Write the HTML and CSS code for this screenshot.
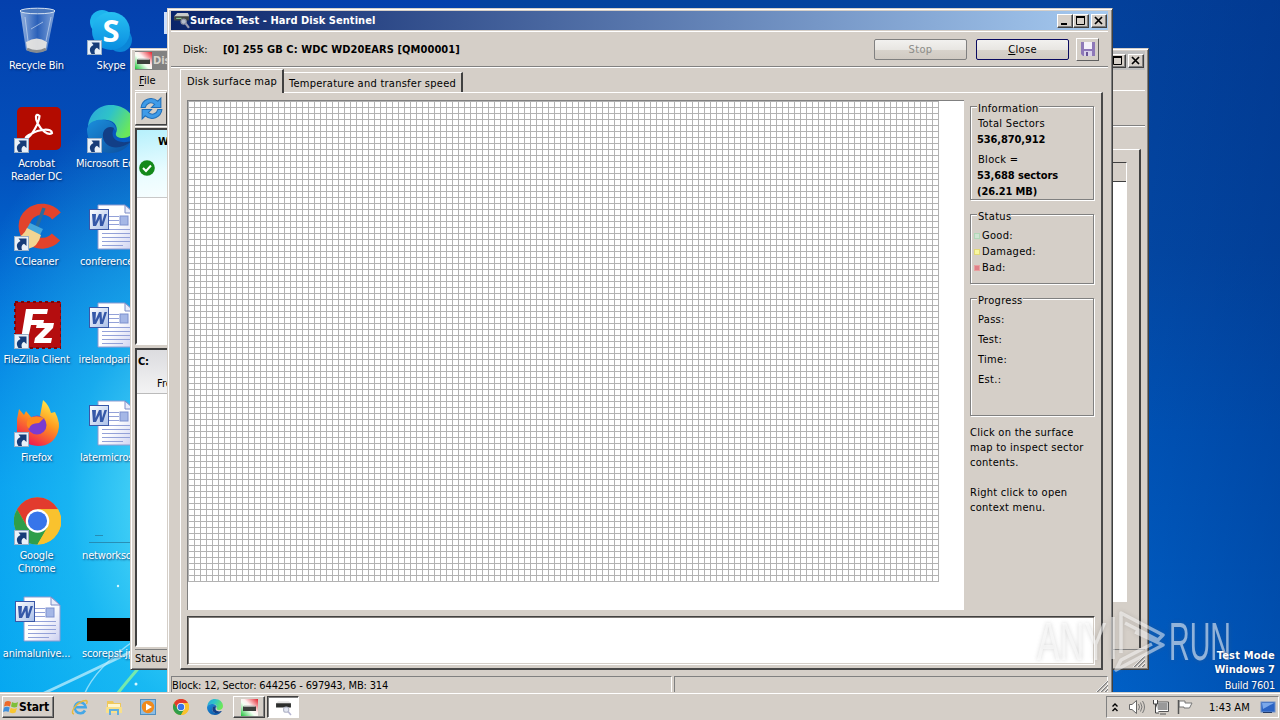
FILE: index.html
```html
<!DOCTYPE html>
<html lang="en">
<head>
<meta charset="utf-8">
<title>Surface Test - Hard Disk Sentinel</title>
<link rel="stylesheet" href="styles.css">
</head>
<body>
<svg class="defs" aria-hidden="true">
  <defs>
    <linearGradient id="gGlass" x1="0" x2="1"><stop offset="0" stop-color="#c9daf0" stop-opacity=".75"/><stop offset=".5" stop-color="#3b6dbd" stop-opacity=".7"/><stop offset="1" stop-color="#b9cfec" stop-opacity=".7"/></linearGradient>
    <linearGradient id="gFox" x1=".8" y1="0" x2=".3" y2="1"><stop offset="0" stop-color="#fff14f"/><stop offset=".45" stop-color="#ff9a1f"/><stop offset="1" stop-color="#f0144f"/></linearGradient>
    <linearGradient id="gEdge" x1="0" y1="0" x2="1" y2=".4"><stop offset="0" stop-color="#2aa6dc"/><stop offset=".5" stop-color="#2fc3c8"/><stop offset="1" stop-color="#6be85a"/></linearGradient>
    <linearGradient id="gEdge2" x1="0" y1="0" x2="1" y2="1"><stop offset="0" stop-color="#1b8fdc"/><stop offset="1" stop-color="#0c4d9c"/></linearGradient>
    <linearGradient id="gPage" x1="0" y1="0" x2="1" y2="1"><stop offset=".5" stop-color="#fff"/><stop offset="1" stop-color="#ccd0f0"/></linearGradient>
    <linearGradient id="gW" x1="0" y1="0" x2="1" y2="1"><stop offset="0" stop-color="#fff"/><stop offset="1" stop-color="#a9bfe8"/></linearGradient>
    <linearGradient id="gHds" x1="0" y1="1" x2="1" y2="0"><stop offset="0" stop-color="#1fc23a"/><stop offset=".42" stop-color="#f4fff4"/><stop offset=".58" stop-color="#fff0f0"/><stop offset="1" stop-color="#e4202c"/></linearGradient>
    <linearGradient id="gSkype" x1="0" y1="0" x2="0" y2="1"><stop offset="0" stop-color="#27c0f2"/><stop offset="1" stop-color="#0a8de0"/></linearGradient>
    <symbol id="link" viewBox="0 0 15 15"><rect x=".5" y=".5" width="14" height="14" fill="#e9f1f9" stroke="#9ab0c8"/><path d="M4.500 14C1.500 10 3 6.500 6.500 5L4.500 2.500H12.500V10L10 7.800C7.500 9 7 11 8 14Z" fill="#163c78"/></symbol>
    <symbol id="word" viewBox="0 0 48 48">
      <path d="M11 2H38L47 10V46H11Z" fill="url(#gPage)" stroke="#8f9bd0"/><path d="M38 2V10H47Z" fill="#e8ecfa" stroke="#7d8cc6"/>
      <path d="M22 13.500H32M22 17.500H32M22 21.500H32M15 26.500H43M15 30.500H43M15 34.500H43M15 38.500H43M15 42.500H36" stroke="#93a1d8"/>
      <rect x="33" y="13" width="8" height="9" fill="#a5b7e6" stroke="#7c90ce"/>
      <rect x="2.500" y="6.500" width="19" height="20" fill="url(#gW)" stroke="#3a58a8"/>
      <path d="M5 11H9L8.500 19L12 11H14.500L15 19L17.500 11H20L16 23H13L12.500 16L9 23H6Z" fill="#3558a8"/>
    </symbol>
    <symbol id="chrome" viewBox="0 0 48 48">
      <circle cx="24" cy="24" r="24" fill="#f9c22e"/><path d="M3 12A24 24 0 0 1 45 12H24L13.600 30Z" fill="#e23b2e"/>
      <path d="M3.200 12A24 24 0 0 0 24 48L34.400 30H13.600Z" fill="#2f9e4a"/><path d="M34.400 30L24 48A24 24 0 0 0 45 12H24Z" fill="#f9c22e"/>
      <circle cx="24" cy="24" r="12" fill="#fff"/><circle cx="24" cy="24" r="9.800" fill="#3775ea"/>
    </symbol>
    <symbol id="edge" viewBox="0 0 48 48">
      <path d="M1 22C2 8 12 0 24 0C38 0 48 10 48 21C48 29 42 33 36 33C31 33 28 31 29 28C31 25 30 16 20 15C10 14 3 18 1 22Z" fill="url(#gEdge)"/>
      <path d="M0 24C2 16 10 14 18 15C26 16 30 22 29 26C24 19 15 24 16 32C17 42 28 45 44 36C40 44 32 48 24 48C10 48 0 38 0 24Z" fill="url(#gEdge2)"/>
      <path d="M16 32C15 25 21 20 27 23C22 33 30 40 45 36C33 46 18 44 16 32Z" fill="#123f87"/>
    </symbol>
    <symbol id="disk" viewBox="0 0 16 16"><path d="M2 3L4 1H14L15 3V7H1V4Z" fill="#c9ccca"/><rect x="1" y="4" width="14" height="4" fill="#404542"/><rect x="3" y="5.500" width="5" height="1" fill="#8dd29a"/><circle cx="10" cy="9" r="2.500" fill="#b4bccb" stroke="#8b8fa0"/><path d="M12 11L15 15" stroke="#9a9bb0" stroke-width="2"/></symbol>
    <symbol id="probe" viewBox="0 0 16 16"><path d="M1 4L3 2H13L15 4Z" fill="#e4e4e4"/><rect x="1" y="4" width="14" height="4" fill="#2c2e2d"/><circle cx="10.500" cy="10" r="2.500" fill="#e2e6f2" stroke="#b4b8c8"/><path d="M12.500 12L15 15" stroke="#b4b4d0" stroke-width="1.500"/></symbol>
    <symbol id="hds" viewBox="0 0 17 17"><rect width="17" height="17" fill="url(#gHds)"/><rect x="2" y="7.500" width="13" height="4.500" fill="#3c3f3c"/><rect x="3" y="6.500" width="11" height="1" fill="#bbb"/></symbol>
    <symbol id="check" viewBox="0 0 16 16"><circle cx="8" cy="8" r="7.800" fill="#14891b"/><path d="M4 8L7 11L12 5.500" fill="none" stroke="#fff" stroke-width="2"/></symbol>
    <symbol id="max" viewBox="0 0 14 12"><path d="M2.500 2V9.500H10.500V2" fill="none" stroke="#000"/><path d="M2 2H11" stroke="#000" stroke-width="2"/></symbol>
    <symbol id="min" viewBox="0 0 14 12"><path d="M3 9H9" stroke="#000" stroke-width="2"/></symbol>
    <symbol id="cross" viewBox="0 0 14 12"><path d="M3 2L10 9M10 2L3 9" stroke="#000" stroke-width="1.700"/></symbol>
    <symbol id="grip" viewBox="0 0 12 12"><path d="M1 12L12 1M5 12L12 5M9 12L12 9" stroke="#808080" stroke-width="1.500"/><path d="M0 12L12 0M4 12L12 4M8 12L12 8" stroke="#fff" stroke-width=".8"/></symbol>
  </defs>
</svg>

<main class="desktop">
  <svg class="wallpaper" viewBox="0 0 1280 720" preserveAspectRatio="none">
    <path d="M40 695Q90 672 180 628" stroke="#d8f8ff" stroke-width="3" opacity=".65" fill="none"/>
    <path d="M84 695Q95 668 135 640" stroke="#bff0ff" stroke-width="1.500" opacity=".7" fill="none"/>
    <path d="M118 693Q128 680 150 655" stroke="#8df59b" stroke-width="3" opacity=".8" fill="none"/>
    <circle cx="118" cy="586" r="1.200" fill="#d8f8ff"/><circle cx="136" cy="684" r="1.500" fill="#d8f8ff"/>
    <rect x="164" y="12" width="10" height="22" fill="#cfe0fa"/>
  </svg>

  <section class="shortcuts">
    <figure><svg viewBox="0 0 48 48"><path d="M7 3L13 43Q24 48 34 43L42 3Z" fill="url(#gGlass)"/><path d="M13 35Q24 28 34 35L33 42Q24 47 14 42Z" fill="#eeeae2" opacity=".9"/><path d="M14 42Q24 47 33 42" stroke="#888c90" stroke-width="3" fill="none"/><ellipse cx="24.500" cy="4" rx="17.500" ry="2.800" fill="#4a77bd" stroke="#d8e4f2"/><path d="M12 10L15 34M38 10L33 34M18 22L30 15" stroke="#dbe7f6" opacity=".6"/></svg><figcaption>Recycle Bin</figcaption></figure>
    <figure><svg viewBox="0 0 48 48"><circle cx="15" cy="15" r="12" fill="#1eb5ee"/><circle cx="33" cy="33" r="12" fill="#0b86d8"/><circle cx="24" cy="24" r="19" fill="url(#gSkype)"/><text class="skype-s" x="24" y="35" text-anchor="middle">S</text><use href="#link" y="33" width="15" height="15"/></svg><figcaption>Skype</figcaption></figure>
    <figure><svg viewBox="0 0 48 48"><rect x="4" y="2" width="44" height="43" rx="5" fill="#b30b00"/><path d="M13 34C19 31 26 18 26.500 11C22 7 22 14 25 19C28 25 35 31 39 28C39 23 26 24 18 29C11 32 12 35 15 32" fill="none" stroke="#fff" stroke-width="2.200"/><use href="#link" y="33" x="1" width="15" height="15"/></svg><figcaption>Acrobat<br>Reader DC</figcaption></figure>
    <figure><svg viewBox="0 0 48 48"><use href="#edge" width="48" height="48"/><use href="#link" y="33" width="15" height="15"/></svg><figcaption>Microsoft Edge</figcaption></figure>
    <figure><svg viewBox="0 0 48 48"><path d="M43.500 13A18 17 0 1 0 43 34" fill="none" stroke="#e2432c" stroke-width="11"/><path d="M31 5L23 26" stroke="#2c6b9a" stroke-width="3.500"/><path d="M17 20L30 26L27 32L13 27Z" fill="#45a7dc"/><path d="M14 25L28 32Q25 44 15 46L2 35Q10 34 14 25Z" fill="#f2d592"/><use href="#link" y="33" x="1" width="15" height="15"/></svg><figcaption>CCleaner</figcaption></figure>
    <figure><svg viewBox="0 0 48 48"><use href="#word" width="48" height="48"/></svg><figcaption>conference...</figcaption></figure>
    <figure><svg viewBox="0 0 48 48"><rect x="2" y="1" width="46" height="46" fill="#b40d0f"/><rect x="2" y="1" width="46" height="46" fill="none" stroke="#7c0508" stroke-width="2" stroke-dasharray="3 3"/><path d="M13 8H35L34 13H20L19 19H31L30 24H18L15 38H8Z" fill="#fff"/><path d="M24 22H41L40 27L30 37H39L38 42H21L22 37L32 27H23Z" fill="#fff"/><use href="#link" y="33" x="1" width="15" height="15"/></svg><figcaption>FileZilla Client</figcaption></figure>
    <figure><svg viewBox="0 0 48 48"><use href="#word" width="48" height="48"/></svg><figcaption>irelandparis...</figcaption></figure>
    <figure><svg viewBox="0 0 48 48"><path d="M4 20L6 10L11 16L13 12L18 18L27 17L30 1Q36 6 38 14L42 13Q48 24 45 33Q40 47 25 47Q9 46 4 33Z" fill="url(#gFox)"/><circle cx="24" cy="26" r="9.500" fill="#7a3bd0"/><path d="M15 20Q22 15 31 19L26 24Q17 24 16 30Q12 26 15 20Z" fill="#ff8a1d"/><use href="#link" y="33" x="1" width="15" height="15"/></svg><figcaption>Firefox</figcaption></figure>
    <figure><svg viewBox="0 0 48 48"><use href="#word" width="48" height="48"/></svg><figcaption>latermicros...</figcaption></figure>
    <figure><svg viewBox="0 0 48 48"><use href="#chrome" x="1" width="47" height="48"/><use href="#link" y="33" x="1" width="15" height="15"/></svg><figcaption>Google<br>Chrome</figcaption></figure>
    <figure><svg viewBox="0 0 48 48"><path d="M2 45.500H48M8 38.500H16" stroke="#25789b" opacity=".7"/></svg><figcaption>networksc...</figcaption></figure>
    <figure><svg viewBox="0 0 48 48"><use href="#word" width="48" height="48"/></svg><figcaption>animalunive...</figcaption></figure>
    <figure><svg viewBox="0 0 48 48"><rect y="23" width="48" height="23" fill="#000"/></svg><figcaption>scorepst.jpg</figcaption></figure>
  </section>

  <section class="window back">
    <header class="caption inactive"><svg class="i17"><use href="#hds"/></svg><b>Disk</b><span class="grow"></span><i class="cb"><svg><use href="#max"/></svg></i><i class="cb close"><svg><use href="#cross"/></svg></i></header>
    <nav class="menu"><span><u>F</u>ile</span></nav>
    <div class="toolbar"><button class="tool"><svg viewBox="0 0 24 24"><path d="M2 11C3 3 12 0 18 5L21 2V11H12L15 8C11 5 7 7 6 11Z" fill="#3f9be8" stroke="#1e6db8"/><path d="M22 13C21 21 12 24 6 19L3 22V13H12L9 16C13 19 17 17 18 13Z" fill="#3f9be8" stroke="#1e6db8"/></svg></button></div>
    <div class="back-body">
      <div class="back-left">
        <div class="pane disks"><div class="disk-item"><b>W</b><svg><use href="#check"/></svg></div></div>
        <div class="pane parts"><div class="part-item"><b>C:</b><span>Free</span></div></div>
      </div>
      <div class="back-page"><div class="back-list"><div class="back-head"></div></div></div>
    </div>
    <footer class="back-status"><span>Status</span><svg class="grip"><use href="#grip"/></svg></footer>
  </section>

  <section class="window front">
    <header class="caption"><svg class="i17"><use href="#disk"/></svg><b class="t-title">Surface Test - Hard Disk Sentinel</b><span class="grow"></span><i class="cb"><svg><use href="#min"/></svg></i><i class="cb"><svg><use href="#max"/></svg></i><i class="cb close"><svg><use href="#cross"/></svg></i></header>
    <div class="diskbar"><span class="lbl">Disk:</span><b class="t-model">[0] 255 GB C: WDC WD20EARS [QM00001]</b><span class="grow"></span><button class="btn off">Stop</button><button class="btn default"><span><u>C</u>lose</span></button><button class="save"><svg viewBox="0 0 16 16"><path d="M1 1H15V15H3L1 13Z" fill="#8e78b8"/><rect x="4" y="1" width="8" height="7" fill="#f4f0fa"/><rect x="4" y="10" width="8" height="5" fill="#d9d2ea"/><rect x="6" y="11" width="2" height="4" fill="#6a5596"/></svg></button></div>
    <div class="tabs"><span class="tab on">Disk surface map</span><span class="tab">Temperature and transfer speed</span></div>
    <div class="page">
      <div class="upper">
        <div class="map"><div class="blocks"></div></div>
        <aside>
          <fieldset class="info"><legend>Information</legend><p>Total Sectors</p><p class="bold">536,870,912</p><p class="gap">Block =</p><p class="bold">53,688 sectors</p><p class="bold">(26.21 MB)</p></fieldset>
          <fieldset class="status"><legend>Status</legend><p><i class="good"></i>Good:</p><p><i class="damaged"></i>Damaged:</p><p><i class="bad"></i>Bad:</p></fieldset>
          <fieldset class="progress"><legend>Progress</legend><p>Pass:</p><p>Test:</p><p>Time:</p><p>Est.:</p></fieldset>
          <div class="hint">Click on the surface<br>map to inspect sector<br>contents.<br><br>Right click to open<br>context menu.</div>
        </aside>
      </div>
      <div class="log"></div>
    </div>
    <footer class="statusbar"><span class="cell first">Block: 12, Sector: 644256 - 697943, MB: 314</span><span class="cell second"></span><svg class="grip"><use href="#grip"/></svg></footer>
  </section>

  <svg class="watermark" viewBox="0 0 200 66">
    <g class="wm-text"><text x="3" y="53" textLength="70" lengthAdjust="spacingAndGlyphs">ANY</text><text x="135" y="53" textLength="62" lengthAdjust="spacingAndGlyphs">RUN</text></g>
    <path d="M79 10V52M87 46V6L129 28L124 33L91 16M101 25L129 38L82 63L87 53L118 37" fill="none" stroke="#fff" stroke-opacity=".5" stroke-width="3.500" stroke-linejoin="round"/>
  </svg>
  <div class="build"><b class="t-mode">Test Mode</b><b>Windows 7</b><span>Build 7601</span></div>

  <footer class="taskbar">
    <button class="start"><svg viewBox="0 0 16 16"><path d="M2 3Q5 1 8 3L7 7.500Q4 6 1 7.500Z" fill="#ee6a2a"/><path d="M9 3Q12 5 15 3L14 8Q11 9 8 7.500Z" fill="#7fbf3a"/><path d="M1 8.500Q4 7 6.700 8.500L5.500 13Q3 11.500 0 13Z" fill="#3f8fdc"/><path d="M7.700 8.800Q11 10.500 14 9L12.500 13.500Q9.500 15 6.500 13.300Z" fill="#f8c630"/></svg><b>Start</b></button>
    <div class="quick">
      <svg viewBox="0 0 18 18"><path d="M14 12.500A5.500 5.500 0 1 1 14.700 9.300H4.500" fill="none" stroke="#45a7e6" stroke-width="2.600"/><path d="M3 16C-2 15 6 3 15 2.500Q17 3 15.500 6" fill="none" stroke="#e8b93a" stroke-width="1.400"/></svg>
      <svg viewBox="0 0 18 18"><path d="M2 3H8L9 5H16V15H2Z" fill="#efc85a"/><path d="M3 6H15V9H3Z" fill="#fff6cf"/><path d="M1 9H17V15H1Z" fill="#f8e08a"/><path d="M5 17V12H13V17" fill="none" stroke="#62aede" stroke-width="2"/></svg>
      <svg viewBox="0 0 18 18"><rect x="1.500" y="1.500" width="15" height="15" fill="#8dbde4" stroke="#4f8fc0"/><circle cx="9" cy="9" r="6.200" fill="#f08a1c"/><path d="M7 5.500L13 9L7 12.500Z" fill="#fff"/></svg>
      <svg viewBox="0 0 18 18"><use href="#chrome" x="1" y="1" width="16" height="16"/></svg>
      <svg viewBox="0 0 18 18"><use href="#edge" x="1" y="1" width="16" height="16"/></svg>
    </div>
    <button class="task"><svg><use href="#hds"/></svg></button>
    <button class="task pressed"><svg><use href="#probe"/></svg></button>
    <span class="grow"></span>
    <div class="tray">
      <svg class="chev" viewBox="0 0 8 10"><path d="M1.500 4.500L4 2L6.500 4.500M1.500 9L4 6.500L6.500 9" fill="none" stroke="#000" stroke-width="1.400"/></svg>
      <svg viewBox="0 0 18 16"><path d="M1.500 5.500H4L8.500 1.500V14.500L4 10.500H1.500Z" fill="#fff" stroke="#666"/><path d="M10.500 5Q12.500 8 10.500 11M12.500 3.500Q15.500 8 12.500 12.500M14.500 2Q18.500 8 14.500 14" fill="none" stroke="#777"/></svg>
      <svg viewBox="0 0 18 16"><rect x="5" y="3.500" width="11" height="8" fill="#999" stroke="#fff"/><path d="M4.500 3H16.500V12.500H4.500ZM8 15H14" fill="none" stroke="#555"/><path d="M1.500 1V5H5.500V1M3.500 5V14H7" fill="#fff" stroke="#444"/></svg>
      <svg viewBox="0 0 18 16"><path d="M3 2H9V4H16L13.500 9H8V8H3Z" fill="#fff" stroke="#777"/><path d="M2.500 1V15" stroke="#555" stroke-width="1.500"/></svg>
      <span class="clock">1:43 AM</span>
      <svg class="show" viewBox="0 0 16 14"><rect x="1" y="2" width="14" height="10" fill="#2b64c4" stroke="#6c8fc8"/><path d="M2 3H14L3 9Z" fill="#7aa8ea"/><path d="M3 12.500H12" stroke="#223a66"/></svg>
    </div>
  </footer>
</main>
</body>
</html>
```
FILE: styles.css
```css
* { box-sizing: border-box; }
body { margin: 0; font: 11px/13px "DejaVu Sans Condensed", "DejaVu Sans", sans-serif; font-stretch: condensed; color: #000; }
p, figure, fieldset { margin: 0; padding: 0; }
button { font: inherit; padding: 0; margin: 0; }
.defs { position: absolute; width: 0; height: 0; }
.grow { flex: 1; }
.desktop { position: relative; width: 1280px; height: 720px; overflow: hidden;
  background:
    radial-gradient(ellipse 280px 420px at 210px 500px, rgba(115,240,250,.95), rgba(40,200,245,.6) 50%, rgba(0,150,240,0) 100%),
    linear-gradient(90deg, rgba(0,0,0,0) 82%, rgba(0,40,120,.35) 100%),
    linear-gradient(180deg, #0440ad 0, #0350bb 22%, #0072dc 45%, #0095ee 68%, #00a4f0 100%) 0 0 / 480px 720px no-repeat,
    linear-gradient(180deg, #03439f 0, #034ba8 35%, #0058bd 60%, #0067d0 100%); }
.wallpaper { position: absolute; inset: 0; width: 1280px; height: 720px; }

.shortcuts { position: absolute; left: -1px; top: 7px; display: grid; grid-template-columns: 75px 74px; grid-auto-rows: 98px; color: #fff; text-align: center; }
.shortcuts figure { display: flex; flex-direction: column; align-items: center; gap: 4px; white-space: nowrap; }
.shortcuts svg { width: 48px; height: 48px; flex: none; }
.shortcuts figcaption { text-shadow: 1px 1px 2px rgba(0,20,70,.75); letter-spacing: -.2px; }
.skype-s { font: bold 31px "Open Sans", sans-serif; fill: #fff; }

.window { position: absolute; display: flex; flex-direction: column; background: #d5cfc8; border: 1px solid; border-color: #d5cfc8 #404040 #404040 #d5cfc8; box-shadow: inset 1px 1px #fff, inset -1px -1px #808080; }
.caption { flex: none; height: 19px; display: flex; align-items: center; padding: 0 2px; background: linear-gradient(90deg, #0a246a, #a6caf0); color: #fff; }
.caption.inactive { background: linear-gradient(90deg, #808080, #c0c0c0); color: #d8d4cc; padding: 0 1px 0 0; }
.i17 { width: 17px; height: 17px; flex: none; margin-right: 1px; }
.t-title { margin-left: -1px; letter-spacing: .05px; }
.cb { width: 16px; height: 14px; background: #d5cfc8; border: 1px solid; border-color: #fff #404040 #404040 #fff; box-shadow: inset -1px -1px #808080; display: flex; }
.cb svg { width: 14px; height: 12px; }
.cb.close { margin-left: 2px; }

.back { left: 130px; top: 48px; width: 1019px; height: 622px; padding: 2px 3px 1px 4px; }
.menu { height: 20px; padding: 4px 4px 0; flex: none; }
.toolbar { height: 36px; flex: none; border-top: 1px solid #fff; border-bottom: 1px solid #808080; box-shadow: 0 1px #fff; padding-top: 1px; }
.tool { display: flex; width: 32px; height: 33px; align-items: center; justify-content: center; background: #d5cfc8; border: 1px solid; border-color: #fff #404040 #404040 #fff; }
.tool svg { width: 25px; height: 25px; }
.back-body { flex: 1; display: flex; justify-content: space-between; padding-top: 2px; min-height: 0; }
.back-left { display: flex; flex-direction: column; gap: 3px; width: 120px; }
.pane { background: #fff; border: 2px solid; border-color: #404040 #fff #fff #404040; }
.disks { height: 217px; }
.parts { height: 299px; }
.disk-item { height: 68px; background: linear-gradient(170deg, #b6f0fc, #e8fcff 50%, #fff); border-bottom: 1px solid #c8c8c8; padding: 5px 0 0 21px; }
.disk-item svg { display: block; width: 16px; height: 16px; margin: 12px 0 0 -19px; }
.part-item { height: 44px; display: flex; flex-direction: column; gap: 9px; background: linear-gradient(#dcdcdf, #f3f3f4); border-bottom: 1px solid #bbb; padding: 5px 0 0 2px; }
.part-item b { letter-spacing: -.3px; margin-left: -1px; }
.part-item span { padding-left: 18px; }
.back-page { width: 860px; height: 499px; margin: 21px 4px 0 0; border: 2px solid; border-color: #fff #404040 #404040 #fff; border-top-width: 1px; border-bottom: 0; padding: 12px 12px 0 0; }
.back-list { height: 440px; background: #fff; border: 1px solid; border-color: #404040 #fff #fff #404040; box-shadow: 1px 1px #d5cfc8; }
.back-head { height: 19px; background: #d5cfc8; border-bottom: 1px solid #404040; }
.back-status { flex: none; height: 19px; display: flex; justify-content: space-between; border-top: 1px solid #808080; padding-top: 2px; }
.grip { width: 12px; height: 12px; }
.back-status .grip { margin-top: 3px; }

.front { left: 167px; top: 8px; width: 946px; height: 690px; padding: 2px 4px 0 3px; box-shadow: inset 1px 1px #fff, inset -1px 0 #808080; }
.front .caption { padding: 0 1px 0 2px; }
.diskbar { flex: none; height: 37px; margin-top: 1px; border-top: 1px solid #fff; border-bottom: 1px solid #fff; box-shadow: inset 0 -1px #808080; display: flex; align-items: center; padding: 0 9px 1px 12px; }
.diskbar .lbl { width: 40px; }
.t-model { letter-spacing: .07px; }
.btn { width: 93px; height: 21px; margin-right: 9px; border-radius: 2px; border: 1px solid #808080; background: linear-gradient(#f2f1ef, #e8e6e2 50%, #d8d3cc 51%, #d0cac2); display: flex; align-items: center; justify-content: center; letter-spacing: .35px; }
.btn.off { color: #8c8c88; }
.btn.default { border-color: #0a0a60; margin-right: 7px; }
.save { width: 23px; height: 23px; display: flex; align-items: center; justify-content: center; background: #d5cfc8; border: 1px solid; border-color: #fff #606060 #606060 #fff; }
.save svg { width: 16px; height: 16px; }
.tabs { flex: none; height: 23px; display: flex; align-items: flex-end; padding-left: 9px; margin-top: 1px; letter-spacing: .25px; }
.tab { height: 20px; border: solid; border-width: 1px 2px 0 0; border-color: #fff #404040 #fff #fff; padding: 4px 0 0 5px; white-space: nowrap; width: 179px; }
.tab.on { width: 104px; height: 24px; border-width: 1px 2px 0 1px; padding: 5px 0 0 6px; position: relative; margin-bottom: -1px; background: #d5cfc8; }
.page { flex: none; width: 923px; height: 578px; margin-left: 9px; border: solid; border-width: 1px 2px 2px 1px; border-color: #fff #484848 #484848 #fff; padding: 7px 6px 0 6px; display: flex; flex-direction: column; gap: 6px; }
.upper { display: flex; height: 510px; }
.map { width: 777px; height: 510px; background: #fff; border: solid #808080; border-width: 1px 0 0 1px; }
.blocks { width: 751px; height: 481px; background: linear-gradient(90deg, #b2b2b2 1px, transparent 1px) 0 0 / 6px 6px, linear-gradient(#b2b2b2 1px, transparent 1px) 0 0 / 6px 6px; }
.log { height: 49px; background: #fff; border: 1px solid; border-color: #404040 #fff #fff #404040; box-shadow: inset 1px 1px #807c78, inset -1px -1px #d5cfc8; }
aside { margin-left: 6px; width: 124px; padding-top: 6px; letter-spacing: .3px; }
fieldset { position: relative; border: 1px solid #808080; box-shadow: 1px 1px #fff, inset 1px 1px #fff; width: 124px; min-width: 0; height: 94px; padding: 0 0 0 7px; }
legend { position: absolute; left: 6px; top: -5px; padding: 0 0 0 1px; background: #d5cfc8; }
fieldset p { white-space: nowrap; }
.info p { height: 16px; line-height: 16px; }
.info p:nth-of-type(1) { margin-top: 9px; }
.info .gap { margin-top: 4px; }
.bold { font-weight: bold; letter-spacing: -.1px; margin-left: -1px; }
.status { height: 70px; margin-top: 14px; padding: 13px 0 0 3px; }
.status p { height: 16px; line-height: 16px; display: flex; align-items: center; }
.status i { width: 6px; height: 6px; margin-right: 2px; border: 1px solid; }
.status .good { background: #cfe4d2; border-color: #b2d8b8; }
.status .damaged { background: #f8f8a0; border-color: #e2d878; }
.status .bad { background: #e08088; border-color: #e8a0a0; }
.progress { height: 118px; margin-top: 14px; padding-top: 11px; }
.progress p { height: 20px; line-height: 20px; }
.hint { margin-top: 9px; line-height: 15px; white-space: nowrap; letter-spacing: .27px; }
.statusbar { flex: none; display: flex; gap: 2px; margin-top: 6px; height: 17px; }
.cell { border: solid #808080; border-width: 1px 1px 0 1px; line-height: 17px; white-space: pre; border-right-color: #fff; letter-spacing: -.15px; }
.first { width: 501px; }
.second { flex: 1; }
.statusbar .grip { margin: 4px 0 0 -14px; }

.watermark { position: absolute; left: 1034px; top: 607px; width: 200px; height: 66px; filter: drop-shadow(0 0 2px rgba(100,100,100,.45)); }
.wm-text { font: 53px "Liberation Sans Narrow", "Liberation Sans", sans-serif; fill: #fff; fill-opacity: .55; }
.build { position: absolute; right: 5px; top: 649px; display: flex; flex-direction: column; text-align: right; color: #fff; line-height: 14px; text-shadow: 0 0 2px rgba(0,0,40,.6); }
.build .t-mode { letter-spacing: .2px; }
.build span { margin-top: 2px; letter-spacing: -.3px; }

.taskbar { position: absolute; left: 0; right: 0; bottom: 0; height: 28px; background: #d5cfc8; border-top: 1px solid #d5cfc8; box-shadow: inset 0 1px #fff; display: flex; align-items: flex-start; padding: 3px 1px 0 2px; }
.start { width: 52px; height: 22px; display: flex; align-items: center; padding-left: 0; background: #d5cfc8; border: 1px solid; border-color: #fff #404040 #404040 #fff; box-shadow: inset -1px -1px #808080; font-size: 12px; letter-spacing: -.15px; }
.start svg { width: 16px; height: 16px; }
.quick { display: flex; gap: 15.800px; padding: 2px 9px 0 17px; }
.quick svg { width: 18px; height: 18px; }
.task { width: 32px; height: 22px; margin-right: 2px; display: flex; align-items: center; justify-content: center; background: #d5cfc8; border: 1px solid; border-color: #fff #404040 #404040 #fff; box-shadow: inset -1px -1px #808080; }
.task.pressed { background: #fff; border-color: #404040 #fff #fff #404040; box-shadow: inset 1px 1px #808080; }
.task svg { width: 17px; height: 17px; }
.tray { width: 173px; height: 22px; border: 1px solid; border-color: #808080 #fff #fff #808080; display: flex; align-items: center; padding-left: 4px; }
.tray svg { width: 18px; height: 16px; margin-right: 6px; }
.tray .chev { width: 8px; height: 10px; margin-right: 9px; }
.clock { margin-left: 9px; white-space: nowrap; flex: 1; }
.tray .show { width: 16px; height: 14px; margin-right: 2px; }
```
